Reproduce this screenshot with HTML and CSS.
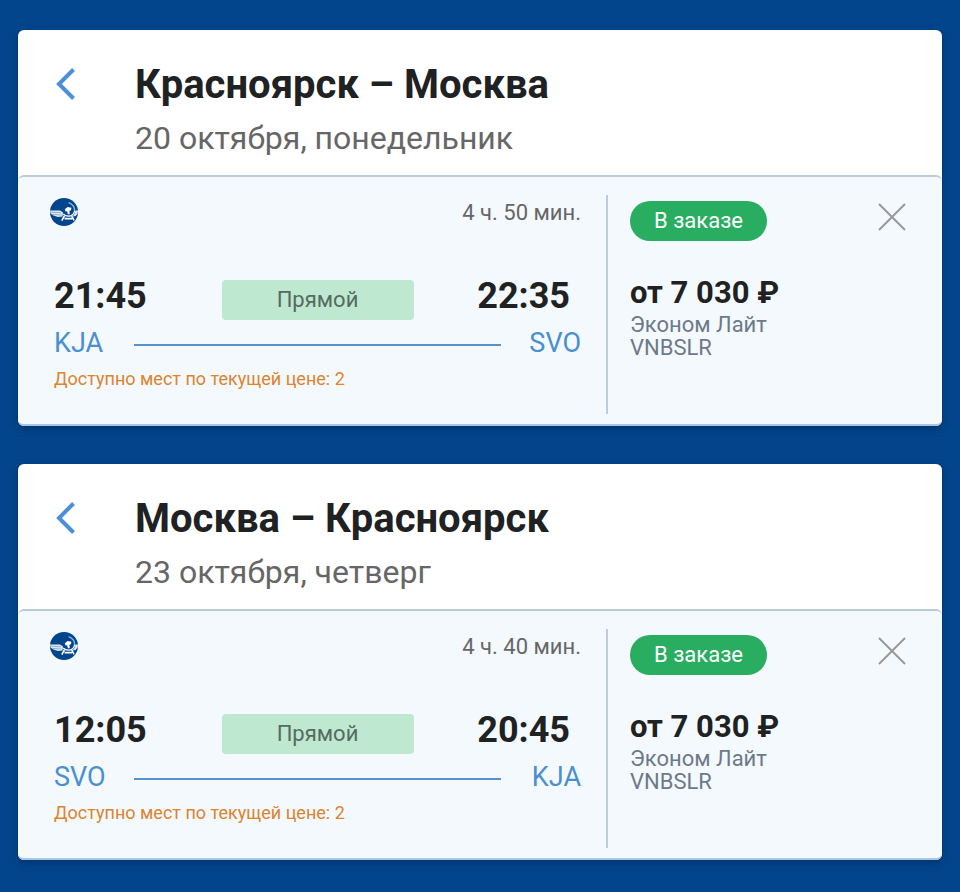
FILE: index.html
```
<!DOCTYPE html>
<html lang="ru">
	<head>
		<meta charset="utf-8">
		<meta name="viewport" content="width=device-width, initial-scale=1">
		<title>Красноярск – Москва</title>
		<link rel="stylesheet" href="styles.css">
	</head>
	<body>
		<!-- shared icons -->
		<svg class="sprite" aria-hidden="true">
			<symbol id="back" viewBox="0 0 20 32">
				<path d="M17.5 1.5 L3 16 L17.5 30.5" fill="none" stroke="currentColor" stroke-width="4"/>
			</symbol>
			<symbol id="close" viewBox="0 0 28 28">
				<path d="M1 1 L27 27 M27 1 L1 27" fill="none" stroke="currentColor" stroke-width="2"/>
			</symbol>
			<symbol id="airline" viewBox="0 0 28 28">
				<circle cx="14" cy="14" r="14" fill="#02458d"/>
				<path d="M0 12.4 H10 L13 14.5 L12.5 18.6 L8 19 L3.4 17.6 L0.6 15.6 Z" fill="#dfe9f5"/>
				<path d="M28 12.6 H25.4 L24.4 16 L22.6 18.4 L25.6 18 L27.6 15.6 Z" fill="#dfe9f5"/>
				<path d="M1 14.2 L11 14.8 M2.4 16.4 L11.5 17" stroke="#6f98c4" stroke-width="0.7"/>
				<path d="M18.6 4.6 C22 6 24.8 9 24.6 12.6" fill="none" stroke="#8db3dc" stroke-width="1.4"/>
				<path d="M24.6 12.6 C24 16.4 21.6 18.2 18.4 18.2 C16.2 18.2 14.4 17.4 13.2 16" fill="none" stroke="#fff" stroke-width="1.2"/>
				<path d="M14.8 11.2 L17.6 9 L21.4 9.8 L21 12.2 L19.4 12.8 L19.8 16.2 L17.8 16.2 L17.2 13.2 L15.6 13.6 Z" fill="#fff"/>
				<path d="M14.4 18 L11.8 22.6 M14.6 20.6 H22 M21.8 18 L24 22.4" fill="none" stroke="#fff" stroke-width="1.6"/>
			</symbol>
		</svg>
		<main class="trips">
			<section class="card">
				<header class="card-head">
					<button type="button" class="back" aria-label="Назад"><svg><use href="#back"/></svg></button>
					<div>
						<h2 class="route">Красноярск – Москва</h2>
						<p class="date">20 октября, понедельник</p>
					</div>
				</header>
				<div class="card-body">
					<div class="flight">
						<div class="row-top">
							<svg class="airline" role="img" aria-label="Аэрофлот"><use href="#airline"/></svg>
							<span class="duration">4 ч. 50 мин.</span>
						</div>
						<div class="times">
							<time>21:45</time>
							<span class="direct">Прямой</span>
							<time class="arrive">22:35</time>
						</div>
						<div class="airports">
							<a href="#">KJA</a>
							<span class="line"></span>
							<a href="#">SVO</a>
						</div>
						<p class="seats">Доступно мест по текущей цене: 2</p>
					</div>
					<div class="fare">
						<div class="fare-top">
							<span class="status">В заказе</span>
							<button type="button" class="close" aria-label="Удалить"><svg><use href="#close"/></svg></button>
						</div>
						<p class="price">от 7 030 ₽</p>
						<p class="tariff">Эконом Лайт<br>VNBSLR</p>
					</div>
				</div>
			</section>
			<section class="card">
				<header class="card-head">
					<button type="button" class="back" aria-label="Назад"><svg><use href="#back"/></svg></button>
					<div>
						<h2 class="route">Москва – Красноярск</h2>
						<p class="date">23 октября, четверг</p>
					</div>
				</header>
				<div class="card-body">
					<div class="flight">
						<div class="row-top">
							<svg class="airline" role="img" aria-label="Аэрофлот"><use href="#airline"/></svg>
							<span class="duration">4 ч. 40 мин.</span>
						</div>
						<div class="times">
							<time>12:05</time>
							<span class="direct">Прямой</span>
							<time class="arrive">20:45</time>
						</div>
						<div class="airports">
							<a href="#">SVO</a>
							<span class="line"></span>
							<a href="#">KJA</a>
						</div>
						<p class="seats">Доступно мест по текущей цене: 2</p>
					</div>
					<div class="fare">
						<div class="fare-top">
							<span class="status">В заказе</span>
							<button type="button" class="close" aria-label="Удалить"><svg><use href="#close"/></svg></button>
						</div>
						<p class="price">от 7 030 ₽</p>
						<p class="tariff">Эконом Лайт<br>VNBSLR</p>
					</div>
				</div>
			</section>
		</main>
	</body>
</html>
```
FILE: styles.css
```
*{box-sizing:border-box;}
body{margin:0; background:#02458d; color:#202122; font-family:Roboto, "Liberation Sans", sans-serif;}
h2, p{margin:0;}
button{padding:0; border:0; background:none; cursor:pointer;}
svg{display:block;}
.sprite{display:none;}

.trips
{
	display:flex;
	flex-direction:column;
	gap:38px;
	padding:30px 18px 32px;
}
.card
{
	background:#fff;
	border-radius:6px;
	box-shadow:0 3px 8px rgba(0,0,0,.25);
}

/* route and date */
.card-head{display:flex; align-items:flex-start; padding:30px 36px 9px 38px;}
.back{width:79px; height:48px; color:#4a8fd8;}
.back svg{width:20px; height:32px;}
.route{font-size:40px; line-height:50px; font-weight:700;}
.date{font-size:32px; line-height:56px; color:#666;}

.card-body
{
	display:grid;
	grid-template-columns:1fr 336px;
	padding:18px 0 10px;
	background:#f4f9fe;
	border-top:2px solid #bccbd9;
	border-bottom:2px solid #a9c4e4;
	border-radius:6px;
}

/* left part */
.flight{padding:3px 25px 22px 36px;}
.row-top{display:flex; justify-content:space-between; align-items:flex-start;}
.airline{width:28px; height:28px; margin-left:-4px;}
.duration{font-size:22px; line-height:30px; color:#666;}
.times
{
	display:grid;
	grid-template-columns:1fr 192px 1fr;
	align-items:start;
	margin-top:48px;
}
.times time{font-size:36px; line-height:40px; font-weight:700;}
.times .arrive{padding-right:11px; text-align:right;}
.direct
{
	margin-top:4px;
	padding:4px 0;
	border-radius:4px;
	background:#bee8d0;
	color:#566b60;
	font-size:22px;
	line-height:32px;
	text-align:center;
}
.airports{display:grid; grid-template-columns:80px 1fr 80px; align-items:center;}
.airports a{color:#4a8fd0; font-size:27px; line-height:46px; text-decoration:none;}
.airports a:last-child{text-align:right;}
.line{height:2px; margin-top:4px; background:#5593cf;}
.seats{font-size:18px; line-height:26px; color:#dd842c;}

/* right part */
.fare{padding:6px 36px 0 22px; border-left:2px solid #bccbdf;}
.fare-top{display:flex; justify-content:space-between; align-items:flex-start;}
.status
{
	padding:4px 24px;
	border-radius:20px;
	background:#29ae61;
	color:#fff;
	font-size:22px;
	line-height:32px;
}
.close{padding-top:2px; color:#999;}
.close svg{width:28px; height:28px;}
.price{margin-top:32px; font-size:31px; line-height:40px; font-weight:700;}
.tariff{font-size:22px; line-height:23px; color:#6d7988;}
```
